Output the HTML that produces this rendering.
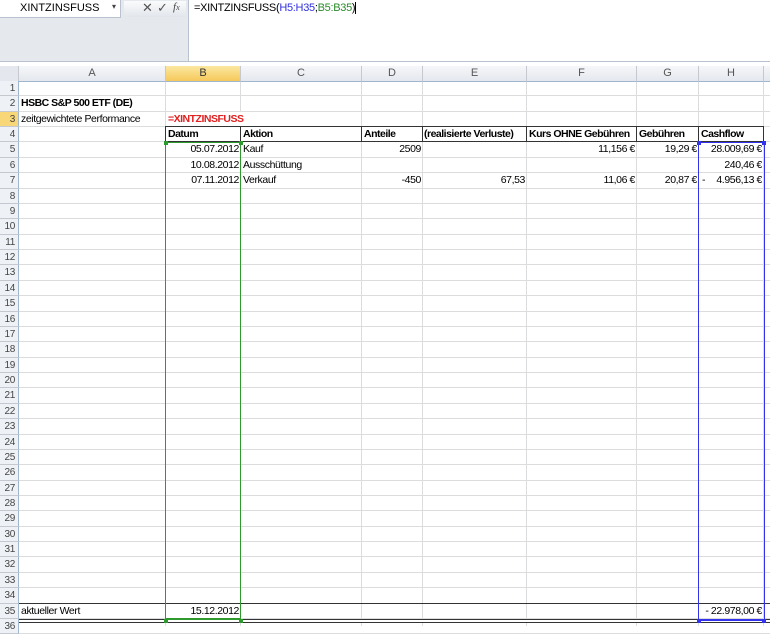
<!DOCTYPE html>
<html><head><meta charset="utf-8"><style>
body{margin:0;width:770px;height:626px;overflow:hidden;background:#fff;font-family:"Liberation Sans",sans-serif;font-size:11px;color:#000;position:relative}
.a{position:absolute;white-space:nowrap}
.hl{position:absolute;left:0;width:770px;height:1px;background:#dadcdd}
.vl{position:absolute;top:66px;width:1px;height:560px;background:#dadcdd}
.ch{position:absolute;top:66px;height:15px;background:linear-gradient(#f6f7f9,#e4e8ee);border-right:1px solid #c5c9cf;border-bottom:1px solid #9eb6ce;text-align:center;line-height:15px;color:#555}
.rh{position:absolute;left:0;width:19px;background:#eef1f5;border-right:1px solid #9eb6ce;border-bottom:1px solid #c5c9cf;text-align:right;color:#444;font-size:10px;box-sizing:border-box;padding-right:3px;letter-spacing:-0.3px}
.t{position:absolute;white-space:nowrap;line-height:15px;font-size:10.5px;letter-spacing:-0.4px;overflow:hidden}
.r{text-align:right}
.b{font-weight:bold;letter-spacing:-0.5px}
</style></head><body>
<div class="a" style="left:0;top:0;width:770px;height:62px;background:#e5e8ed"></div>
<div class="a" style="left:0;top:0;width:120px;height:17px;background:#fff;border-bottom:1px solid #b9c3cf;border-right:1px solid #b9c3cf"></div>
<div class="a" style="left:20px;top:2px;font-size:11px">XINTZINSFUSS</div>
<div class="a" style="left:112px;top:2px;font-size:8px;color:#444">▾</div>
<div class="a" style="left:124px;top:1px;width:62px;height:16px;background:linear-gradient(#fafbfc,#e2e6eb)"></div>
<div class="a" style="left:142px;top:0px;font-size:13px;color:#555">✕</div>
<div class="a" style="left:157px;top:0px;font-size:13px;color:#555">✓</div>
<div class="a" style="left:173px;top:1px;font-size:11px;font-style:italic;font-family:'Liberation Serif',serif;color:#444">f<span style="font-size:8px">x</span></div>
<div class="a" style="left:188px;top:0;width:582px;height:62px;background:#fff;border-left:1px solid #b9c3cf"></div>
<div class="a" style="left:194px;top:2px;font-size:11px;letter-spacing:-0.3px">=XINTZINSFUSS(<span style="color:#3030e0">H5:H35</span>;<span style="color:#2a8a2a">B5:B35</span>)<span style="display:inline-block;width:1px;height:12px;background:#000;vertical-align:middle"></span></div>
<div class="a" style="left:0;top:61px;width:770px;height:1px;background:#b9c3cf"></div>
<div id="g"></div>
<script>
var cols=[[19,166,'A'],[166,241,'B'],[241,362,'C'],[362,423,'D'],[423,527,'E'],[527,637,'F'],[637,699,'G'],[699,764,'H'],[764,800,'']];
var h='';var T=81,R=15.37;
for(var i=0;i<=36;i++){h+='<div class="hl" style="top:'+Math.round(T+i*R-1)+'px"></div>';}
cols.forEach(function(c){h+='<div class="vl" style="left:'+(c[0]-1)+'px"></div>';});
h+='<div class="ch" style="left:0;width:18px;background:#e4e8ee"></div>';
cols.forEach(function(c){var s=c[2]=='B'?'background:linear-gradient(#fbe7a0,#f5c85a);color:#333;':'';h+='<div class="ch" style="left:'+c[0]+'px;width:'+(c[1]-c[0]-1)+'px;'+s+'">'+c[2]+'</div>';});
for(var i=1;i<=36;i++){var y=Math.round(T+(i-1)*R);var y2=Math.round(T+i*R);var s=i==3?'background:#f7d777;':'';h+='<div class="rh" style="top:'+y+'px;height:'+(y2-y)+'px;line-height:'+(y2-y)+'px;'+s+'">'+i+'</div>';}
function cell(r,x,w,txt,cls,st){var y=Math.round(T+(r-1)*R);h+='<div class="t '+(cls||'')+'" style="top:'+y+'px;left:'+x+'px;width:'+w+'px;'+(st||'')+'">'+txt+'</div>';}
cell(2,21,200,'HSBC S&amp;P 500 ETF (DE)','b');
cell(3,21,150,'zeitgewichtete Performance');
h+='<div class="a" style="left:166px;top:112px;width:75px;height:15px;background:#fff"></div>';
cell(3,168,80,'=XINTZINSFUSS','b','color:#e02020');
var y4=Math.round(T+3*R);
h+='<div class="a" style="left:166px;top:'+(y4-1)+'px;width:598px;height:1px;background:#333"></div>';
h+='<div class="a" style="left:166px;top:'+(Math.round(T+4*R)-1)+'px;width:598px;height:1px;background:#333"></div>';
[166,241,362,423,527,637,699,764].forEach(function(x){h+='<div class="a" style="left:'+(x-1)+'px;top:'+(y4-1)+'px;width:1px;height:16px;background:#333"></div>';});
cell(4,168,70,'Datum','b');cell(4,243,70,'Aktion','b');cell(4,364,58,'Anteile','b');cell(4,424,102,'(realisierte Verluste)','b');cell(4,529,107,'Kurs OHNE Gebühren','b');cell(4,639,59,'Gebühren','b');cell(4,701,62,'Cashflow','b');
cell(5,166,73,'05.07.2012','r');cell(5,243,60,'Kauf');cell(5,362,59,'2509','r');cell(5,527,108,'11,156 €','r');cell(5,637,60,'19,29 €','r');cell(5,699,63,'28.009,69 €','r');
cell(6,166,73,'10.08.2012','r');cell(6,243,80,'Ausschüttung');cell(6,699,63,'240,46 €','r');
cell(7,166,73,'07.11.2012','r');cell(7,243,60,'Verkauf');cell(7,362,59,'-450','r');cell(7,423,102,'67,53','r');cell(7,527,108,'11,06 €','r');cell(7,637,60,'20,87 €','r');cell(7,699,63,'4.956,13 €','r');cell(7,702,10,'-');
var y35=Math.round(T+34*R);
h+='<div class="a" style="left:19px;top:'+(y35-1)+'px;width:751px;height:1px;background:#333"></div>';
h+='<div class="a" style="left:19px;top:'+(y35+15)+'px;width:751px;height:4px;border-top:1px solid #333;border-bottom:1px solid #333;background:#fff;box-sizing:border-box"></div>';
cell(35,21,100,'aktueller Wert');cell(35,166,73,'15.12.2012','r');cell(35,699,63,'- 22.978,00 €','r');
var yb=Math.round(T+4*R);
h+='<div class="a" style="left:165px;top:'+yb+'px;width:76px;height:'+(y35+16-yb)+'px;border:1px solid #2e9a2e;border-bottom-width:2px;box-sizing:border-box"></div>';
h+='<div class="a" style="left:698px;top:'+yb+'px;width:67px;height:'+(y35+17-yb)+'px;border:1px solid #3333ee;border-bottom-width:2px;box-sizing:border-box"></div>';
[[164,yb-1,'#2e9a2e'],[239,yb-1,'#2e9a2e'],[164,y35+15,'#2e9a2e'],[239,y35+15,'#2e9a2e'],[697,yb-1,'#3333ee'],[762,yb-1,'#3333ee'],[697,y35+15,'#3333ee'],[762,y35+15,'#3333ee']].forEach(function(p){h+='<div class="a" style="left:'+p[0]+'px;top:'+p[1]+'px;width:4px;height:4px;background:'+p[2]+'"></div>';});
document.getElementById('g').innerHTML=h;
</script>
</body></html>
